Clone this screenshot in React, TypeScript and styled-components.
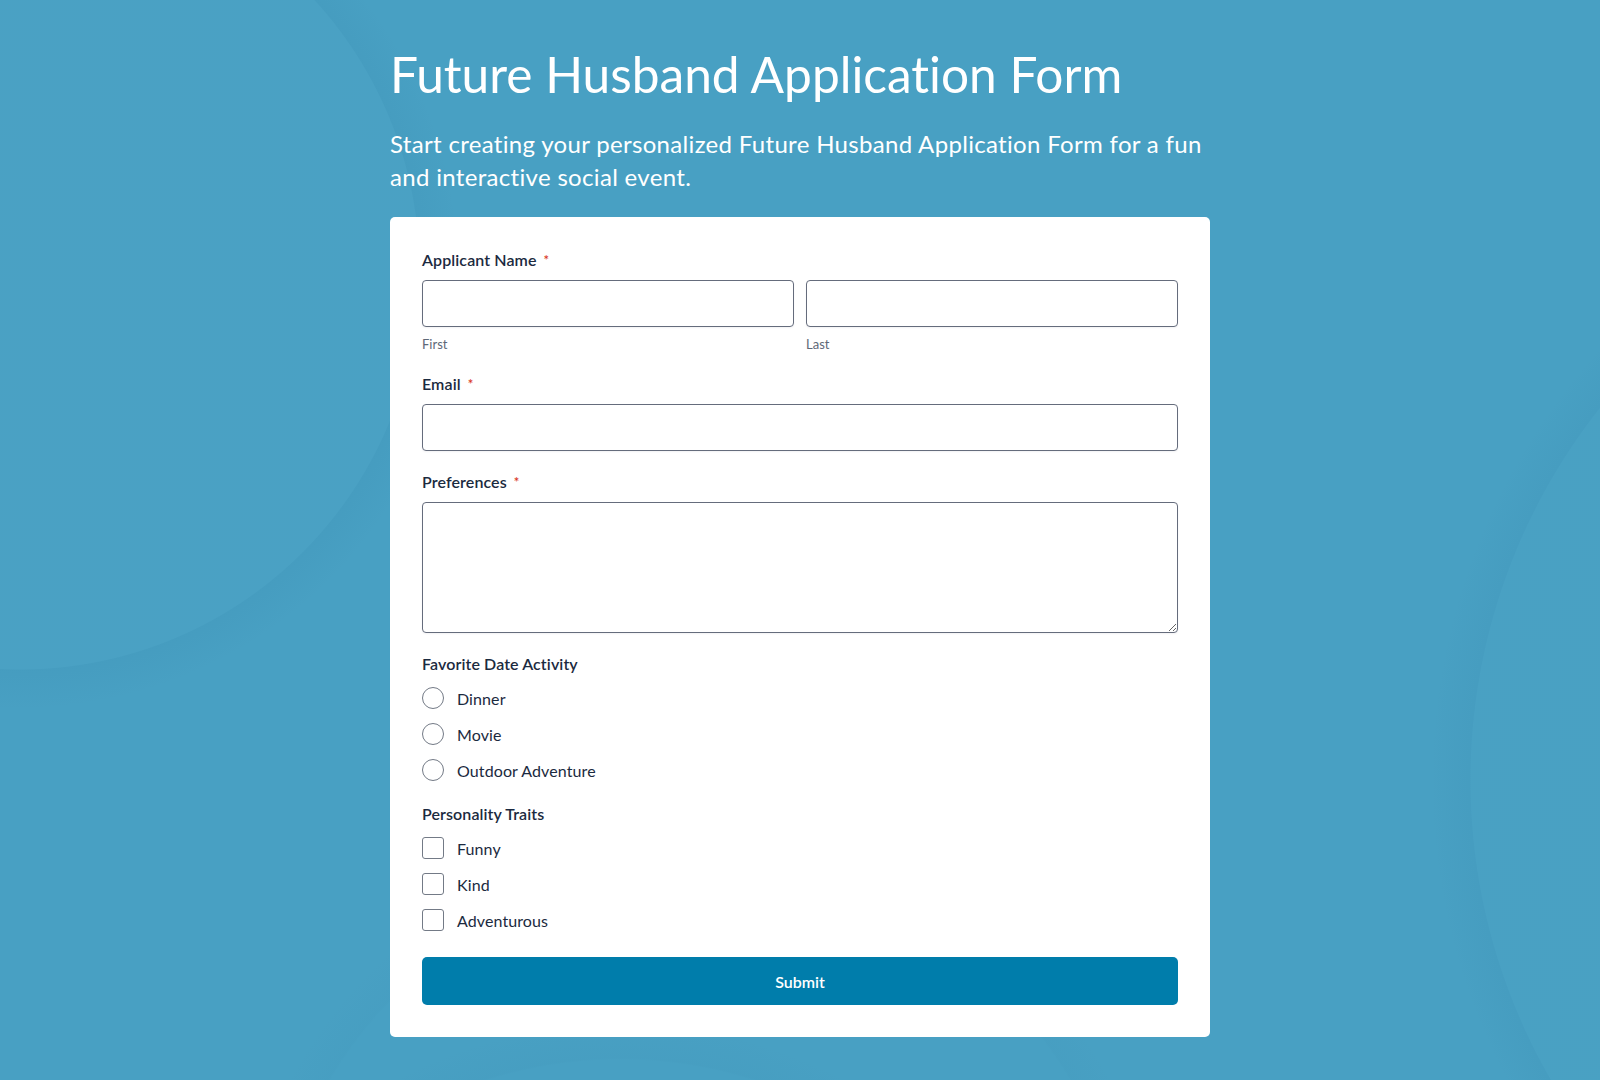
import React from 'react';
import styled, { createGlobalStyle } from 'styled-components';

const GlobalStyle = createGlobalStyle`
  html, body {
    margin: 0;
    padding: 0;
  }
  body {
    font-family: Lato, "Noto Sans", "Liberation Sans", sans-serif;
    font-variant-ligatures: none;
    background: #48a0c3;
  }
  * { box-sizing: border-box; }
`;

const Page = styled.div`
  min-height: 1080px;
  padding: 44px 0 40px;
  background-color: #48a0c3;
  background-image:
    radial-gradient(circle at 20px 270px, rgba(255,255,255,0.01) 399px, rgba(20,80,120,0.045) 400px, rgba(20,80,120,0) 440px),
    radial-gradient(circle at 2070px 780px, rgba(255,255,255,0.008) 599px, rgba(20,80,120,0.04) 600px, rgba(20,80,120,0) 640px),
    radial-gradient(circle at 620px 1500px, rgba(20,80,120,0) 440px, rgba(20,80,120,0.025) 442px, rgba(20,80,120,0) 480px),
    radial-gradient(circle at 700px 1300px, rgba(20,80,120,0) 430px, rgba(20,80,120,0.02) 432px, rgba(20,80,120,0) 470px);
`;

const Container = styled.div`
  width: 820px;
  margin: 0 auto;
`;

const Title = styled.h1`
  margin: 0;
  font-size: 49.6px;
  line-height: 60px;
  font-weight: 400;
  color: #ffffff;
`;

const Subtitle = styled.p`
  margin: 23px 0 24px;
  font-size: 24px;
  line-height: 33px;
  letter-spacing: 0.32px;
  font-weight: 400;
  color: #ffffff;
`;

const Card = styled.form`
  background: #ffffff;
  border-radius: 5px;
  padding: 31px 32px 32px;
  display: flex;
  flex-direction: column;
  gap: 19px;
`;

const Field = styled.div`
  display: flex;
  flex-direction: column;
`;

const Label = styled.label`
  display: flex;
  align-items: center;
  gap: 7px;
  height: 24px;
  font-size: 16px;
  line-height: 24px;
  font-weight: 600;
  letter-spacing: 0.1px;
  color: #1b2a40;
`;

const Required = styled.span`
  color: #d9381e;
  font-size: 13px;
  line-height: 1;
`;

const Row = styled.div`
  display: grid;
  grid-template-columns: 1fr 1fr;
  gap: 12px;
  margin-top: 8px;
`;

const Column = styled.div`
  display: flex;
  flex-direction: column;
`;

const TextInput = styled.input<{ $top?: boolean }>`
  height: 47px;
  width: 100%;
  margin-top: ${p => (p.$top ? '8px' : '0')};
  border: 1px solid #656c7c;
  border-radius: 4px;
  background: #fff;
  box-shadow: 0 1px 2px rgba(30, 40, 60, 0.06);
  font-family: inherit;
  font-size: 16px;
  padding: 0 12px;
`;

const TextArea = styled.textarea`
  height: 131px;
  width: 100%;
  margin-top: 8px;
  border: 1px solid #656c7c;
  border-radius: 4px;
  box-shadow: 0 1px 2px rgba(30, 40, 60, 0.06);
  font-family: inherit;
  font-size: 16px;
  padding: 10px 12px;
`;

const SubLabel = styled.span`
  margin-top: 8px;
  font-size: 13px;
  line-height: 18px;
  color: #5e6878;
`;

const Options = styled.div`
  display: flex;
  flex-direction: column;
  gap: 14px;
  margin-top: 11px;
  padding-bottom: 2px;
`;

const Option = styled.label`
  display: flex;
  align-items: center;
  gap: 13px;
  height: 22px;
  font-size: 16px;
  letter-spacing: 0.1px;
  color: #1b2a40;
`;

const Choice = styled.input<{ $round?: boolean }>`
  appearance: none;
  -webkit-appearance: none;
  margin: 0;
  width: 22px;
  height: 22px;
  flex: none;
  border: 1px solid #737a86;
  border-radius: ${p => (p.$round ? '50%' : '3px')};
  background: #fff;
`;

const SubmitButton = styled.button`
  margin-top: 5px;
  height: 48px;
  width: 100%;
  border: none;
  border-radius: 5px;
  background: #007dab;
  color: #ffffff;
  font-family: inherit;
  font-size: 16px;
  font-weight: 600;
  cursor: pointer;
`;

const activities = ['Dinner', 'Movie', 'Outdoor Adventure'];
const traits = ['Funny', 'Kind', 'Adventurous'];

export default function App() {
  return (
    <>
      <GlobalStyle />
      <Page>
        <Container>
          <Title>Future Husband Application Form</Title>
          <Subtitle>
            Start creating your personalized Future Husband Application Form for a fun and interactive social event.
          </Subtitle>

          <Card onSubmit={e => e.preventDefault()}>
            <Field>
              <Label>Applicant Name <Required>*</Required></Label>
              <Row>
                <Column>
                  <TextInput type="text" />
                  <SubLabel>First</SubLabel>
                </Column>
                <Column>
                  <TextInput type="text" />
                  <SubLabel>Last</SubLabel>
                </Column>
              </Row>
            </Field>

            <Field>
              <Label>Email <Required>*</Required></Label>
              <TextInput type="email" $top />
            </Field>

            <Field>
              <Label>Preferences <Required>*</Required></Label>
              <TextArea />
            </Field>

            <Field>
              <Label>Favorite Date Activity</Label>
              <Options>
                {activities.map(a => (
                  <Option key={a}>
                    <Choice type="radio" name="activity" $round />
                    {a}
                  </Option>
                ))}
              </Options>
            </Field>

            <Field>
              <Label>Personality Traits</Label>
              <Options>
                {traits.map(t => (
                  <Option key={t}>
                    <Choice type="checkbox" />
                    {t}
                  </Option>
                ))}
              </Options>
            </Field>

            <SubmitButton type="submit">Submit</SubmitButton>
          </Card>
        </Container>
      </Page>
    </>
  );
}
